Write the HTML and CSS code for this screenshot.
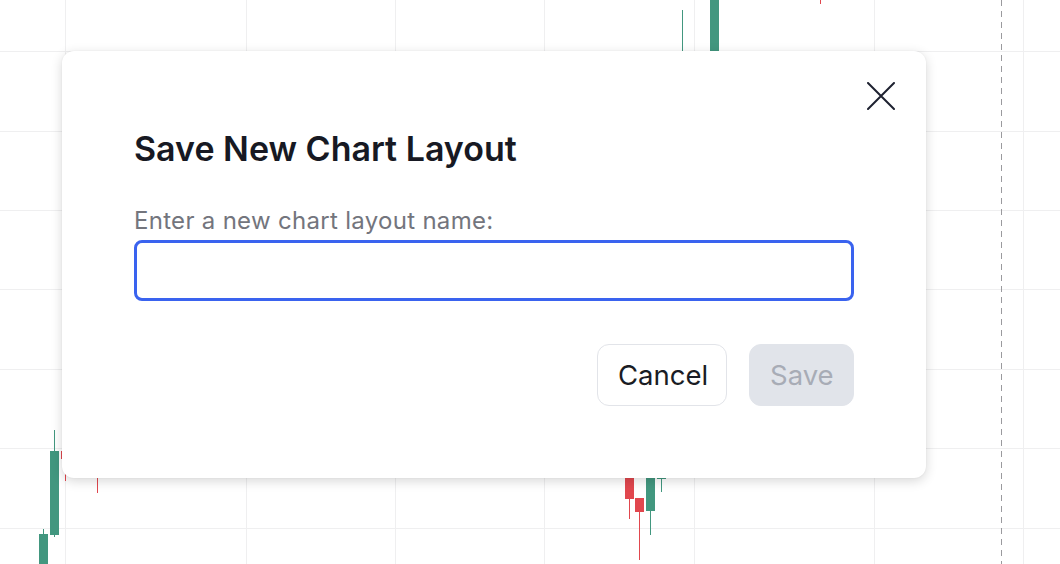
FILE: index.html
```html
<!DOCTYPE html>
<html lang="en">
<head>
<meta charset="utf-8">
<title>Save New Chart Layout</title>
<link rel="stylesheet" href="styles.css">
</head>
<body>
<div class="chart">
  <svg class="chart-svg" width="1060" height="564" viewBox="0 0 1060 564" shape-rendering="crispEdges">
    <g class="grid" stroke="#efeff0" stroke-width="1">
      <line x1="65.5" y1="0" x2="65.5" y2="564"/>
      <line x1="246.5" y1="0" x2="246.5" y2="564"/>
      <line x1="395.5" y1="0" x2="395.5" y2="564"/>
      <line x1="544.5" y1="0" x2="544.5" y2="564"/>
      <line x1="694.5" y1="0" x2="694.5" y2="564"/>
      <line x1="874.5" y1="0" x2="874.5" y2="564"/>
      <line x1="1023.5" y1="0" x2="1023.5" y2="564"/>
      <line x1="0" y1="51.5" x2="1060" y2="51.5"/>
      <line x1="0" y1="131.5" x2="1060" y2="131.5"/>
      <line x1="0" y1="210.5" x2="1060" y2="210.5"/>
      <line x1="0" y1="289.5" x2="1060" y2="289.5"/>
      <line x1="0" y1="369.5" x2="1060" y2="369.5"/>
      <line x1="0" y1="448.5" x2="1060" y2="448.5"/>
      <line x1="0" y1="528.5" x2="1060" y2="528.5"/>
    </g>
    <line x1="1001.5" y1="0" x2="1001.5" y2="564" stroke="#9a9a9e" stroke-width="1" stroke-dasharray="6 5"/>
    <g fill="#42977f">
      <rect x="682" y="10" width="1" height="50"/>
      <rect x="710" y="0" width="9" height="60"/>
      <rect x="43" y="529" width="1" height="6"/>
      <rect x="39" y="534" width="9" height="30"/>
      <rect x="54" y="430" width="1" height="107"/>
      <rect x="50" y="451" width="9" height="84"/>
      <rect x="650" y="505" width="1" height="30"/>
      <rect x="646" y="470" width="9" height="41"/>
      <rect x="661" y="478" width="1" height="14"/>
      <rect x="657" y="477" width="9" height="2"/>
    </g>
    <g fill="#e1474e">
      <rect x="820" y="0" width="1" height="4"/>
      <rect x="61" y="451" width="1" height="8"/>
      <rect x="65" y="470" width="1" height="11"/>
      <rect x="97" y="470" width="1" height="23"/>
      <rect x="629" y="495" width="1" height="24"/>
      <rect x="625" y="470" width="9" height="29"/>
      <rect x="639" y="505" width="1" height="55"/>
      <rect x="635" y="498" width="9" height="14"/>
    </g>
  </svg>
</div>

<div class="dialog" role="dialog" aria-labelledby="dlg-title">
  <button class="close" type="button" aria-label="Close">
    <svg width="28" height="28" viewBox="0 0 28 28" fill="none" stroke="#1e2130" stroke-width="2" stroke-linecap="round">
      <path d="M1 1 L27 27 M27 1 L1 27"/>
    </svg>
  </button>
  <h2 class="title" id="dlg-title">Save New Chart Layout</h2>
  <label class="label" for="layout-name">Enter a new chart layout name:</label>
  <input class="name-input" id="layout-name" type="text">
  <div class="actions">
    <button class="btn btn-cancel" type="button">Cancel</button>
    <button class="btn btn-save" type="button" disabled>Save</button>
  </div>
</div>
</body>
</html>
```

FILE: styles.css
```css
html, body {
  margin: 0;
  padding: 0;
  background: #ffffff;
  width: 1060px;
  height: 564px;
  overflow: hidden;
  font-family: Inter, "Noto Sans", "Liberation Sans", sans-serif;
}

.chart {
  position: absolute;
  inset: 0;
}

.chart-svg {
  display: block;
}

.dialog {
  position: absolute;
  left: 62px;
  top: 51px;
  width: 864px;
  height: 427px;
  box-sizing: border-box;
  padding: 72px;
  background: #ffffff;
  border-radius: 12px;
  box-shadow: 0 3px 12px rgba(0, 0, 0, 0.16), 0 0 2px rgba(0, 0, 0, 0.06);
  display: flex;
  flex-direction: column;
}

.close {
  position: absolute;
  top: 31px;
  right: 31px;
  width: 28px;
  height: 28px;
  padding: 0;
  border: 0;
  background: transparent;
  cursor: pointer;
}

.close svg {
  display: block;
}

.title {
  margin: 2px 0 0;
  font-size: 34px;
  line-height: 48px;
  font-weight: 600;
  color: #171923;
  letter-spacing: 0;
}

.label {
  margin-top: 34px;
  font-size: 24px;
  line-height: 28px;
  letter-spacing: 0.3px;
  color: #73757d;
}

.name-input {
  margin-top: 5px;
  height: 61px;
  box-sizing: border-box;
  border: 3px solid #3a63ef;
  border-radius: 8px;
  outline: none;
  font: inherit;
  font-size: 24px;
  padding: 0 16px;
}

.actions {
  margin-top: 43px;
  display: flex;
  justify-content: flex-end;
  gap: 22px;
}

.btn {
  height: 62px;
  box-sizing: border-box;
  border-radius: 12px;
  font-family: inherit;
  font-size: 27.5px;
  font-weight: 400;
  padding: 0 20px;
}

.btn-cancel {
  width: 130px;
  background: #ffffff;
  border: 1px solid #e2e4e9;
  color: #1a1c24;
}

.btn-save {
  width: 105px;
  background: #e1e4ea;
  border: 1px solid #e1e4ea;
  color: #a8acb6;
}
```
